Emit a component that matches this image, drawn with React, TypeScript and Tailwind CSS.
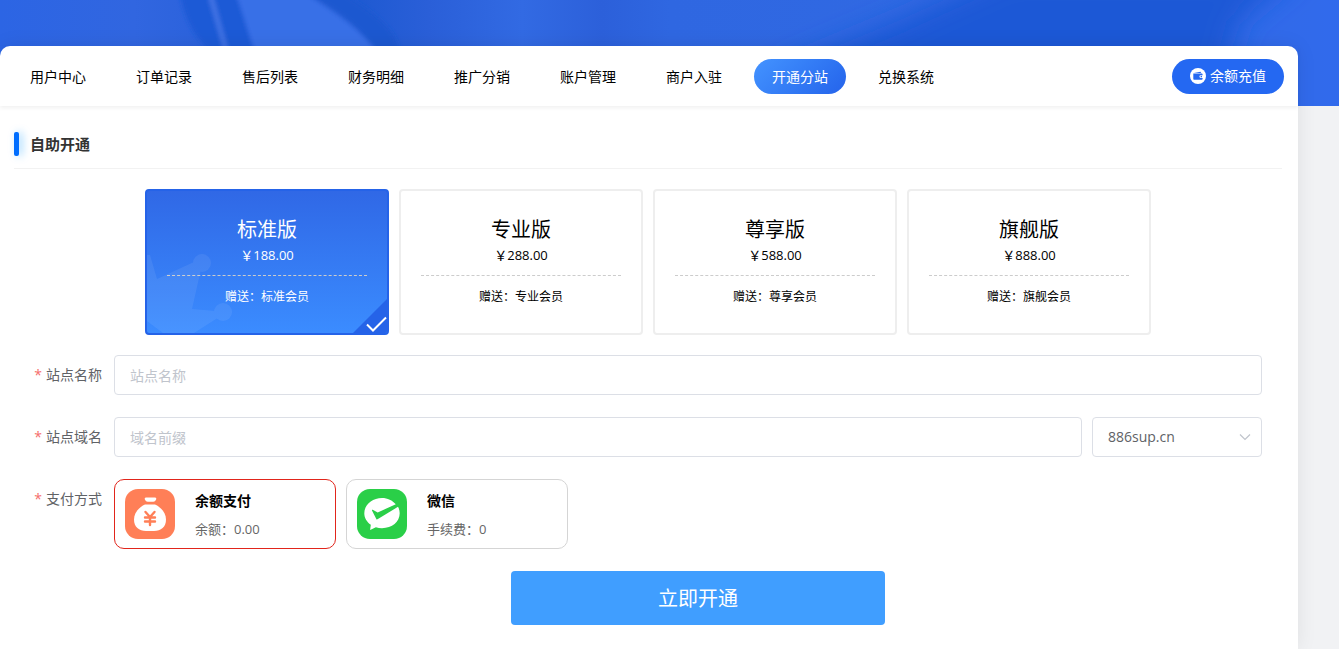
import React, { useState } from 'react';

interface Plan {
  name: string;
  price: string;
  gift: string;
}

interface PayMethod {
  id: string;
  name: string;
  note: string;
  icon: React.ReactNode;
}

const navItems = [
  '用户中心',
  '订单记录',
  '售后列表',
  '财务明细',
  '推广分销',
  '账户管理',
  '商户入驻',
  '开通分站',
  '兑换系统',
];

const plans: Plan[] = [
  { name: '标准版', price: '188.00', gift: '标准会员' },
  { name: '专业版', price: '288.00', gift: '专业会员' },
  { name: '尊享版', price: '588.00', gift: '尊享会员' },
  { name: '旗舰版', price: '888.00', gift: '旗舰会员' },
];

const Banner: React.FC = () => (
  <svg
    className="absolute inset-x-0 top-0 h-[106px] w-full"
    viewBox="0 0 1339 106"
    preserveAspectRatio="none"
    aria-hidden="true"
  >
    <defs>
      <linearGradient id="base" x1="0" x2="1" y1="0" y2="0">
        <stop offset="0" stopColor="#2c65e4" />
        <stop offset="0.1" stopColor="#3166e0" />
        <stop offset="0.27" stopColor="#1f5ad2" />
        <stop offset="0.32" stopColor="#2a5fd8" />
        <stop offset="0.39" stopColor="#326ae3" />
        <stop offset="0.45" stopColor="#2c60da" />
        <stop offset="0.5" stopColor="#2f67e1" />
        <stop offset="0.85" stopColor="#316ae4" />
        <stop offset="1" stopColor="#316aec" />
      </linearGradient>
      <filter id="soft" x="-20%" y="-20%" width="140%" height="140%">
        <feGaussianBlur stdDeviation="2" />
      </filter>
      <filter id="softer" x="-20%" y="-60%" width="140%" height="220%">
        <feGaussianBlur stdDeviation="14" />
      </filter>
    </defs>
    <rect width="1339" height="106" fill="url(#base)" />
    <g filter="url(#softer)">
      <path d="M780 70L900 20L1010-30H1300L1240 20L1210 130H780Z" fill="#1a59d6" />
    </g>
    <g filter="url(#soft)">
      <path d="M180-6C184 14 192 36 210 50H256C250 30 242 10 236-6Z" fill="#1b5ad6" />
      <path d="M207-6L224 52H229L213-6Z" fill="#3f72e4" />
      <path d="M236-6L256 56H380C362 30 336 12 306-6Z" fill="#3870e7" />
      <path d="M306-6C340 10 362 30 380 56H400C400 30 370 10 344-6Z" fill="#1f59d0" />
    </g>
  </svg>
);

const WalletIcon: React.FC = () => (
  <svg className="size-4" viewBox="0 0 16 16" aria-hidden="true">
    <circle cx="8" cy="8" r="8" fill="#fff" />
    <path d="M3.300 5.500h8.200c.7 0 1.100.4 1.100 1.100v.6h-1.800a1.400 1.400 0 0 0 0 2.800h1.800v.7c0 .7-.4 1.100-1.100 1.100H4.500c-.8 0-1.200-.4-1.200-1.100Z" fill="#2468f2" />
    <path d="M4 5 10.500 3.700l.7 1.300Z" fill="#2468f2" />
    <circle cx="11.300" cy="8.600" r=".8" fill="#2468f2" />
  </svg>
);

const MoneyBagIcon: React.FC = () => (
  <svg className="size-[50px]" viewBox="0 0 50 50" aria-hidden="true">
    <rect width="50" height="50" rx="13" fill="#ff7f57" />
    <path d="M21 8.500h9c1.300 0 1.600 1.200 1 2.200-.6 1.100-1.500 2-2.700 2h-5.600c-1.200 0-2.100-.9-2.700-2-.6-1-.3-2.200 1-2.200Z" fill="#fff" />
    <path d="M20 15.500h10C36.500 18.500 41 24 41 30.500c0 7.500-5 11.500-12 11.500h-8c-7 0-12-4-12-11.500C9 24 13.500 18.500 20 15.500Z" fill="#fff" />
    <path d="M20.500 23l4.500 5 4.500-5M20 28.500h10M20 32.500h10M25 28V36" fill="none" stroke="#ff7f57" strokeWidth="2.400" strokeLinecap="round" />
  </svg>
);

const WechatPayIcon: React.FC = () => (
  <svg className="size-[50px]" viewBox="0 0 50 50" aria-hidden="true">
    <rect width="50" height="50" rx="13" fill="#2acf48" />
    <path d="M25 9C15 9 7.300 15.700 7.300 24.300c0 4.700 2.500 8.700 6.500 11.500l-.7 5.200 5.800-2.700c1.900.6 4 .9 6.100.9 10 0 17.700-6.300 17.700-14.900 0-2.300-.6-4.500-1.700-6.500L20.500 30.300c-.6.300-1 .1-1.200-.4L15 21.500c-.2-.6.200-.9.700-.7l5 2.600L38.800 15.300C35.500 11.300 30.500 9 25 9Z" fill="#fff" />
  </svg>
);

const payMethods: PayMethod[] = [
  { id: 'balance', name: '余额支付', note: '余额：0.00', icon: <MoneyBagIcon /> },
  { id: 'wechat', name: '微信', note: '手续费：0', icon: <WechatPayIcon /> },
];

const PlanCard: React.FC<{ plan: Plan; active: boolean; onSelect: () => void }> = ({ plan, active, onSelect }) => {
  return (
    <button
      type="button"
      aria-pressed={active}
      onClick={onSelect}
      className={`relative flex w-[244px] flex-col overflow-hidden rounded-sm border-2 px-5 pt-6 pb-7 text-center ${
        active ? 'border-[#2563e8] bg-linear-to-b from-[#3068e6] to-[#3b8cff] text-white' : 'border-[#eeeeee] bg-white text-black'
      }`}
    >
      {active && (
        <>
          <svg className="absolute bottom-0 left-0 h-20 w-[86px]" viewBox="0 0 86 80" aria-hidden="true">
            <g fill="#fff" opacity=".07">
              <path d="M0 2H3L10 26 47 9 54 16 45 56 68 58 72 64 47 80H16L0 68Z" />
              <circle cx="55" cy="10" r="9" />
              <circle cx="76" cy="59" r="9" />
            </g>
          </svg>
          <svg className="absolute right-0 bottom-0 size-[34px]" viewBox="0 0 34 34" aria-hidden="true">
            <path d="M34 0V34H0Z" fill="#2563e8" />
            <path d="M14 25.500 20 31.500 33 18.500" fill="none" stroke="#fff" strokeWidth="2" />
          </svg>
        </>
      )}
      <span className="text-xl leading-[30px]">{plan.name}</span>
      <span className="text-[13px] leading-5">￥{plan.price}</span>
      <span className="mt-2.5 border-t border-dashed border-[#cccccc] pt-[13px] text-xs leading-4">赠送：{plan.gift}</span>
    </button>
  );
};

const Label: React.FC<{ htmlFor?: string; children: React.ReactNode }> = ({ htmlFor, children }) => (
  <label htmlFor={htmlFor} className="w-20 shrink-0 pr-3 text-right text-sm leading-10 text-[#606266]">
    <span className="mr-1 text-[#f56c6c]">*</span>
    {children}
  </label>
);

const App: React.FC = () => {
  const [plan, setPlan] = useState(0);
  const [pay, setPay] = useState('balance');

  return (
    <div className="relative min-h-screen bg-[#f1f2f4] pt-[46px] font-['Open_Sans','Noto_Sans_CJK_SC',sans-serif]">
      <Banner />
      <main className="relative mr-[41px] min-h-[calc(100vh-46px)] rounded-t-[10px] bg-white shadow-[0_0_20px_rgba(0,0,0,0.08)]">
        <header className="flex h-[60px] items-center justify-between pr-3.5 pl-3 shadow-[0_2px_4px_rgba(0,0,0,0.06)]">
          <nav className="flex gap-3.5">
            {navItems.map((item) => (
              <a
                key={item}
                href="#"
                className={`rounded-full px-[18px] text-sm leading-[35px] ${
                  item === '开通分站' ? 'bg-linear-135 from-[#4493ff] to-[#2563eb] text-white' : 'text-black'
                }`}
              >
                {item}
              </a>
            ))}
          </nav>
          <button type="button" className="flex h-[35px] items-center gap-1 rounded-full bg-[#2468f2] px-[18px] text-sm text-white">
            <WalletIcon />
            余额充值
          </button>
        </header>

        <section className="pt-6 pr-4 pb-6 pl-3.5">
          <div className="flex items-start gap-[11px] border-b border-[#f2f2f2] pb-2.5">
            <span className="mt-0.5 h-6 w-[5px] rounded-xs bg-[#006eff] shadow-[3px_0_8px_rgba(0,150,255,0.4)]" />
            <h1 className="text-[15px] leading-7 font-bold text-[#333333]">自助开通</h1>
          </div>

          <div className="mt-5 flex flex-wrap justify-center gap-2.5">
            {plans.map((item, index) => (
              <PlanCard key={item.name} plan={item} active={plan === index} onSelect={() => setPlan(index)} />
            ))}
          </div>

          <form className="mt-5 flex flex-col gap-[22px] pl-5" onSubmit={(e) => e.preventDefault()}>
            <div className="flex pr-5">
              <Label htmlFor="site-name">站点名称</Label>
              <input
                id="site-name"
                placeholder="站点名称"
                className="h-10 min-w-0 flex-1 rounded-sm border border-[#dcdfe6] px-[15px] text-sm text-[#606266] placeholder:text-[#c0c4cc]"
              />
            </div>

            <div className="flex pr-5">
              <Label htmlFor="site-domain">站点域名</Label>
              <input
                id="site-domain"
                placeholder="域名前缀"
                className="h-10 min-w-0 flex-1 rounded-sm border border-[#dcdfe6] px-[15px] text-sm text-[#606266] placeholder:text-[#c0c4cc]"
              />
              <div className="relative ml-2.5 w-[170px]">
                <select
                  aria-label="域名后缀"
                  className="h-10 w-full appearance-none rounded-sm border border-[#dcdfe6] bg-white px-[15px] text-sm text-[#606266]"
                >
                  <option>886sup.cn</option>
                </select>
                <svg className="pointer-events-none absolute top-[13px] right-2.5 size-3.5" viewBox="0 0 14 14" fill="none" aria-hidden="true">
                  <path d="M2 4.500 7 9.500 12 4.500" stroke="#c0c4cc" strokeWidth="1.200" />
                </svg>
              </div>
            </div>

            <div className="flex pr-5">
              <Label>支付方式</Label>
              <div className="flex flex-wrap gap-2.5">
                {payMethods.map((method) => (
                  <button
                    key={method.id}
                    type="button"
                    aria-pressed={pay === method.id}
                    onClick={() => setPay(method.id)}
                    className={`flex h-[70px] w-[222px] items-center gap-5 rounded-[10px] border px-2.5 text-left ${
                      pay === method.id ? 'border-[#e1251b]' : 'border-[#d5d5d5]'
                    }`}
                  >
                    {method.icon}
                    <span className="flex flex-col pt-0.5 text-sm leading-7">
                      <span className="font-bold text-black">{method.name}</span>
                      <span className="text-[13px] text-[#666666]">{method.note}</span>
                    </span>
                  </button>
                ))}
              </div>
            </div>

            <div className="ml-20 flex justify-center">
              <button type="submit" className="h-[54px] w-[32%] rounded-sm bg-[#409eff] pt-0.5 text-xl text-white">
                立即开通
              </button>
            </div>
          </form>
        </section>
      </main>
    </div>
  );
};

export default App;
